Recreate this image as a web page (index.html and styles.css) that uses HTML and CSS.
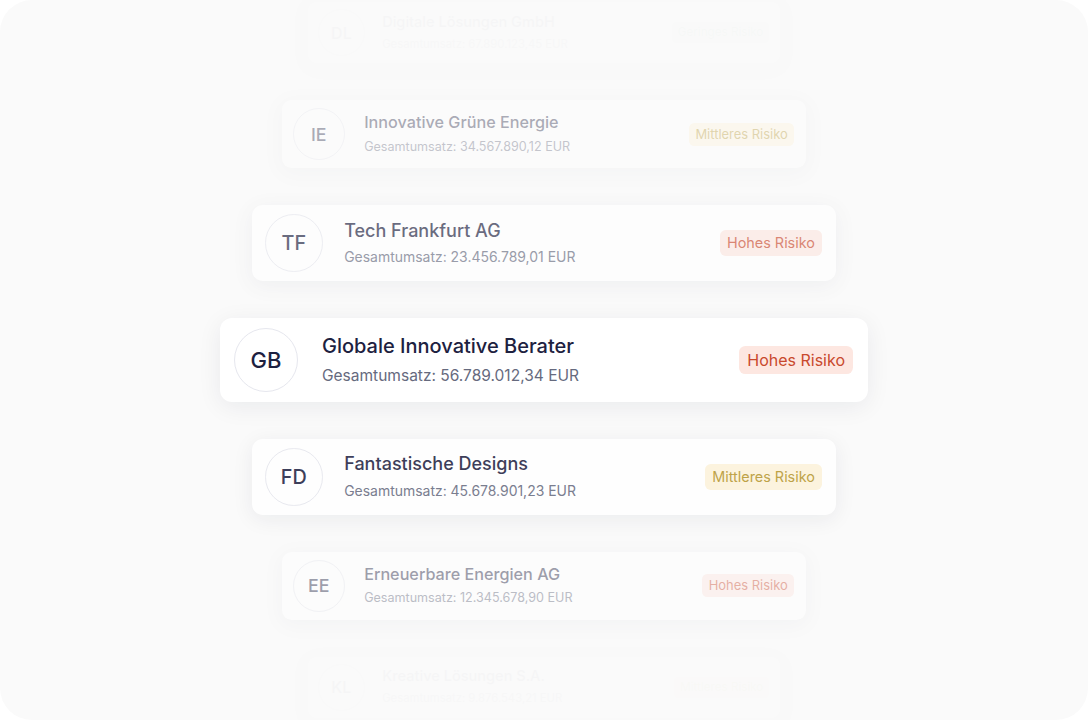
FILE: index.html
```html
<!DOCTYPE html>
<html lang="de">
<head>
  <meta charset="UTF-8">
  <meta name="viewport" content="width=device-width, initial-scale=1.0">
  <title>Risikoübersicht</title>
  <link rel="stylesheet" href="styles.css">
</head>
<body>
  <div class="stage">
    <ul class="risk-list">
      <!-- oberste Karte, fast unsichtbar -->
      <li class="company size-4 ghost">
        <div class="avatar">DL</div>
        <div class="info">
          <div class="name">Digitale Lösungen GmbH</div>
          <div class="revenue">Gesamtumsatz: 67.890.123,45 EUR</div>
        </div>
        <span class="badge badge-low">Geringes Risiko</span>
      </li>

      <li class="company size-3 faded-top">
        <div class="avatar">IE</div>
        <div class="info">
          <div class="name">Innovative Grüne Energie</div>
          <div class="revenue">Gesamtumsatz: 34.567.890,12 EUR</div>
        </div>
        <span class="badge badge-mid">Mittleres Risiko</span>
      </li>

      <li class="company size-2 dim-top">
        <div class="avatar">TF</div>
        <div class="info">
          <div class="name">Tech Frankfurt AG</div>
          <div class="revenue">Gesamtumsatz: 23.456.789,01 EUR</div>
        </div>
        <span class="badge badge-high">Hohes Risiko</span>
      </li>

      <!-- ausgewählte Karte -->
      <li class="company size-1 active">
        <div class="avatar">GB</div>
        <div class="info">
          <div class="name">Globale Innovative Berater</div>
          <div class="revenue">Gesamtumsatz: 56.789.012,34 EUR</div>
        </div>
        <span class="badge badge-high">Hohes Risiko</span>
      </li>

      <li class="company size-2 dim-bottom">
        <div class="avatar">FD</div>
        <div class="info">
          <div class="name">Fantastische Designs</div>
          <div class="revenue">Gesamtumsatz: 45.678.901,23 EUR</div>
        </div>
        <span class="badge badge-mid">Mittleres Risiko</span>
      </li>

      <li class="company size-3 faded-bottom">
        <div class="avatar">EE</div>
        <div class="info">
          <div class="name">Erneuerbare Energien AG</div>
          <div class="revenue">Gesamtumsatz: 12.345.678,90 EUR</div>
        </div>
        <span class="badge badge-high">Hohes Risiko</span>
      </li>

      <!-- unterste Karte, fast unsichtbar -->
      <li class="company size-4 ghost">
        <div class="avatar">KL</div>
        <div class="info">
          <div class="name">Kreative Lösungen S.A.</div>
          <div class="revenue">Gesamtumsatz: 9.876.543,21 EUR</div>
        </div>
        <span class="badge badge-mid">Mittleres Risiko</span>
      </li>
    </ul>
  </div>
</body>
</html>
```

FILE: styles.css
```css
html, body {
  margin: 0;
  padding: 0;
  background-color: #fff;
}

body {
  font-family: Inter, "Noto Sans", sans-serif;
  color: #1d2140;
}

.stage {
  width: 100vw;
  height: 100vh;
  background-color: #fafafa;
  border-radius: 32px;
  overflow: hidden;
  display: flex;
  align-items: center;
  justify-content: center;
}

.risk-list {
  list-style: none;
  margin: 0;
  padding: 0;
  display: flex;
  flex-direction: column;
  align-items: center;
  gap: 37px;
}

/* jede Stufe ist 0.9 mal so gross wie die vorige */
.size-1 { font-size: 16px; }
.size-2 { font-size: 14.4px; }
.size-3 { font-size: 12.96px; }
.size-4 { font-size: 11.66px; }

.company {
  width: 40.5em;
  box-sizing: border-box;
  padding: 0.625em 0.9375em 0.625em 0.875em;
  background-color: #fff;
  border-radius: 0.75em;
  box-shadow: 0 0.3em 1.5em rgba(20, 24, 50, 0.07);
  display: flex;
  align-items: center;
}

.active { opacity: 1; }
.dim-top { opacity: 0.65; }
.dim-bottom { opacity: 0.86; }
.faded-top { opacity: 0.36; }
.faded-bottom { opacity: 0.42; }
.ghost { opacity: 0.015; }

/* Initialen 22px bei Stufe 1, Kreis 64px */
.avatar {
  font-size: 1.375em;
  font-weight: 500;
  width: 2.909em;
  height: 2.909em;
  box-sizing: border-box;
  border: 0.07em solid #e6e7ee;
  border-radius: 50%;
  display: flex;
  align-items: center;
  justify-content: center;
  flex-shrink: 0;
}

.info {
  margin-left: 1.5em;
  display: flex;
  flex-direction: column;
}

.name {
  font-size: 1.25em;
  line-height: 1.2;
  font-weight: 500;
  color: #1d2140;
}

.revenue {
  font-size: 0.97em;
  line-height: 1.3;
  margin-top: 0.5em;
  color: #666a7e;
}

.badge {
  margin-left: auto;
  font-size: 1em;
  line-height: 1.8em;
  padding: 0 0.5em;
  border-radius: 0.4em;
}

.badge-high {
  background-color: #fde7e1;
  color: #c9492d;
}

.badge-mid {
  background-color: #fdf3da;
  color: #b5952c;
}

.badge-low {
  background-color: #e3f5e9;
  color: #2f8a52;
}
```
